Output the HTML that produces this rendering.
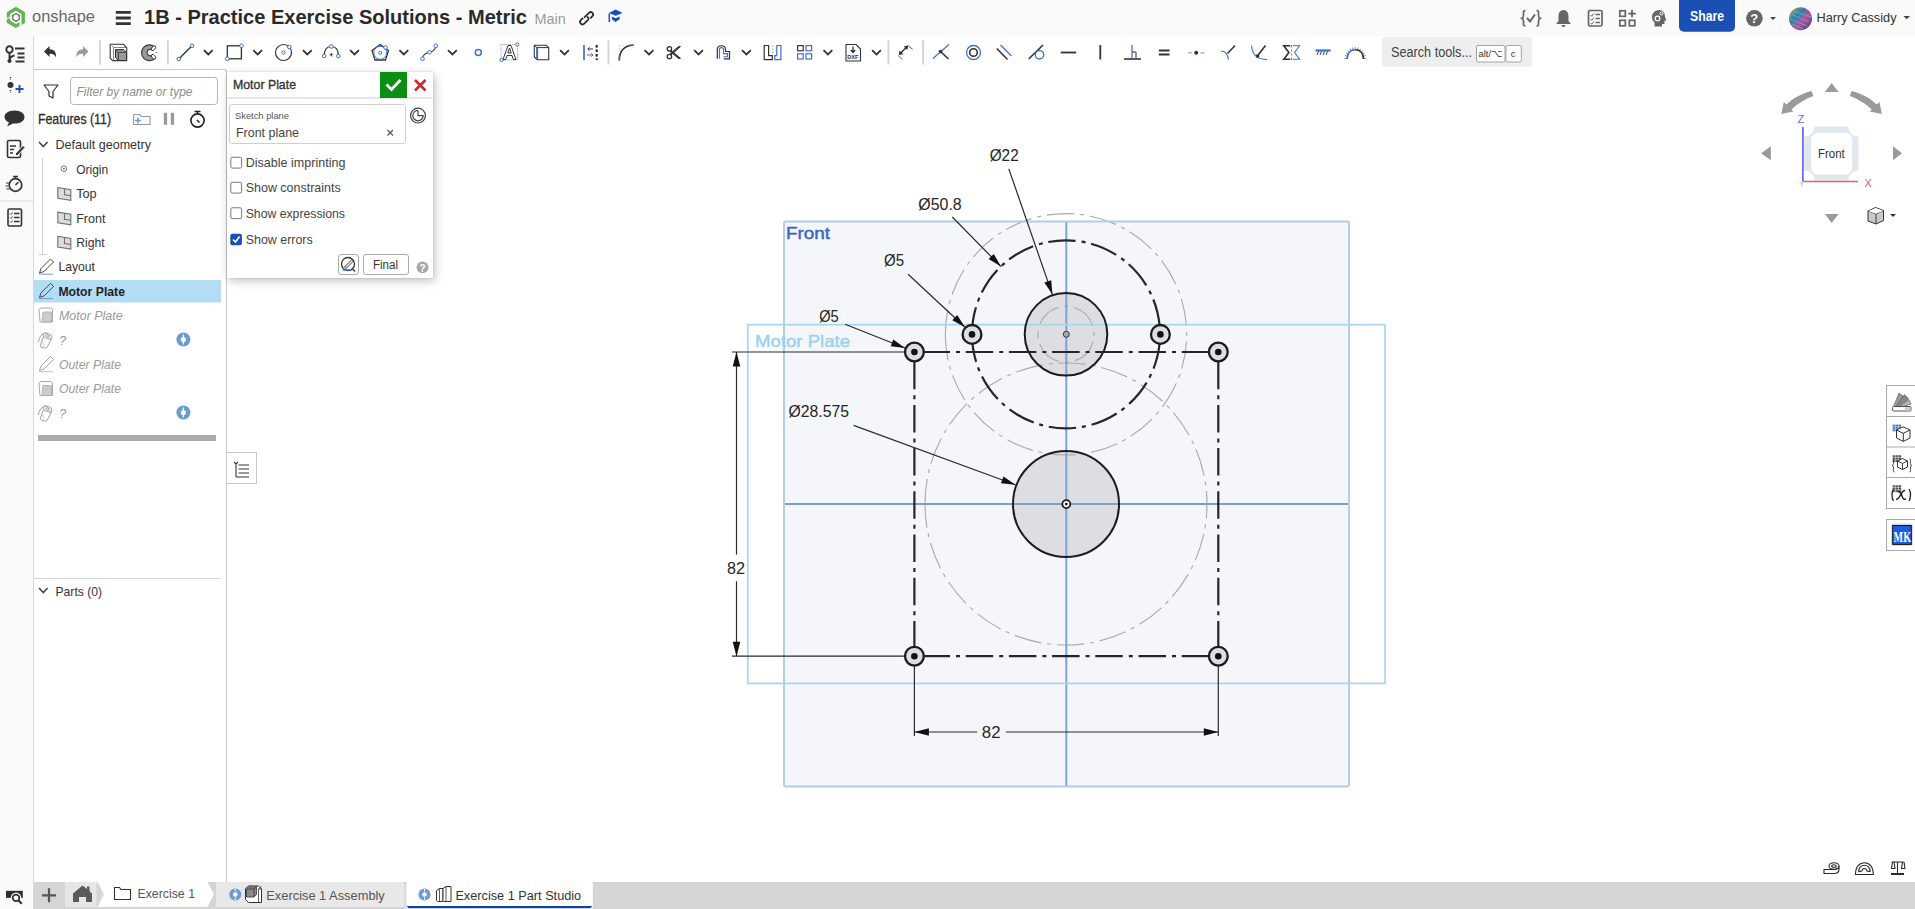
<!DOCTYPE html>
<html><head><meta charset="utf-8">
<style>
*{box-sizing:border-box;margin:0;padding:0}
html,body{width:1915px;height:909px;overflow:hidden;background:#fff;font-family:"Liberation Sans",sans-serif;color:#333}
.a{position:absolute}
svg{position:absolute;overflow:visible}
text{font-family:"Liberation Sans",sans-serif}
#topbar{left:0;top:0;width:1915px;height:36px;background:#fafafa}
#lstrip{left:0;top:36px;width:34px;height:873px;background:#fafafa;border-right:1px solid #d8d8d8}
#fpanel{left:33px;top:69px;width:194px;height:813px;background:#fff;border-top:1px solid #c9c9c9;border-right:1px solid #c9c9c9;border-left:1px solid #d8d8d8;border-top-right-radius:3px}
#tabbar{left:34px;top:882px;width:1881px;height:27px;background:#d5d5d5}
#dlg{left:227px;top:72px;width:206px;height:206px;background:#fff;box-shadow:2px 3px 9px rgba(0,0,0,.24),0 0 2px rgba(0,0,0,.14)}
</style></head><body>
<div class="a" id="topbar"></div>
<div class="a" id="lstrip"></div>

<!-- SKETCH -->
<svg style="left:0;top:0" width="1915" height="909" viewBox="0 0 1915 909">
<rect x="784" y="221.5" width="565" height="565" rx="1.5" fill="#f4f6f9"/>
<circle cx="1066" cy="334.3" r="41.3" fill="#dcdee2"/>
<circle cx="1066" cy="504" r="53" fill="#dcdee2"/>
<g fill="none" stroke="#ababab" stroke-width="1.15" stroke-dasharray="27.5 6 4 5.7">
<path d="M945.3 334.3A120.7 120.7 0 0 1 1186.7 334.3A120.7 120.7 0 0 1 945.3 334.3" stroke-dashoffset="2.6"/>
<path d="M925 504A141 141 0 0 1 1207 504A141 141 0 0 1 925 504" stroke-dashoffset="2.2"/>
<path d="M1038 334.3A28 28 0 0 1 1094 334.3A28 28 0 0 1 1038 334.3" stroke-dashoffset="34.4"/>
</g>
<g stroke="#7aa0d2" stroke-width="1.9" fill="none">
<line x1="1066.3" y1="221.5" x2="1066.3" y2="786.5"/>
<line x1="784" y1="504" x2="1349" y2="504"/>
</g>
<rect x="784" y="221.5" width="565" height="565" rx="1.5" fill="none" stroke="#b3cbe7" stroke-width="1.9"/>
<rect x="747.8" y="324.7" width="637.2" height="358.7" fill="none" stroke="#a9d6ee" stroke-width="1.7"/>
<text x="786" y="239.3" font-size="17" fill="#3a66c4" stroke="#3a66c4" stroke-width="0.45" textLength="44" lengthAdjust="spacingAndGlyphs">Front</text>
<text x="755" y="347.3" font-size="17" fill="#9cd2ee" stroke="#9cd2ee" stroke-width="0.45" textLength="95" lengthAdjust="spacingAndGlyphs">Motor Plate</text>
<circle cx="1066" cy="334.3" r="41.3" fill="none" stroke="#1c1c1c" stroke-width="2"/>
<circle cx="1066" cy="504" r="53" fill="none" stroke="#1c1c1c" stroke-width="2"/>
<path d="M972 334.3A94 94 0 0 1 1160 334.3A94 94 0 0 1 972 334.3" fill="none" stroke="#262626" stroke-width="2.2" stroke-dasharray="27.5 6 4 5.7"/>
<line x1="922.5" y1="352" x2="1218" y2="352" stroke="#262626" stroke-width="2.2" stroke-dasharray="27.5 6 4 5.7" fill="none"/>
<line x1="922.5" y1="656.2" x2="1218" y2="656.2" stroke="#262626" stroke-width="2.2" stroke-dasharray="27.5 6 4 5.7" fill="none"/>
<line x1="914.4" y1="361.7" x2="914.4" y2="656" stroke="#262626" stroke-width="2.2" stroke-dasharray="27.5 6 4 5.7" fill="none"/>
<line x1="1218.3" y1="361.7" x2="1218.3" y2="656" stroke="#262626" stroke-width="2.2" stroke-dasharray="27.5 6 4 5.7" fill="none"/>
<path d="M732 352H914M732 656.2H914M914.4 656V736M1218.3 656V736M736.5 352V554.5M736.5 581.3V656M914.4 732H977.2M1005.8 732H1218.3" stroke="#2a2a2a" stroke-width="1.2" fill="none"/>
<path d="M1008.8 168.9L1052.4 294.6M952.3 217L1001 266.6M908.1 274.3L965 327.2M845.1 324.2L905 348M853.6 425.4L1015.4 484.7" stroke="#2a2a2a" stroke-width="1.2" fill="none"/>
<path d="M1052.4 294.6L1044.4 282.6L1051.2 280.2Z" fill="#111"/>
<path d="M1001.0 266.6L988.6 259.1L993.8 254.1Z" fill="#111"/>
<path d="M965.0 327.2L952.3 320.3L957.2 315.0Z" fill="#111"/>
<path d="M905.0 348.0L890.7 346.2L893.3 339.5Z" fill="#111"/>
<path d="M1015.4 484.7L1001.0 483.3L1003.5 476.5Z" fill="#111"/>
<path d="M736.5 352.0L740.3 366.5L732.7 366.5Z" fill="#111"/>
<path d="M736.5 656.2L732.7 641.7L740.3 641.7Z" fill="#111"/>
<path d="M914.4 732.0L928.9 728.2L928.9 735.8Z" fill="#111"/>
<path d="M1218.3 732.0L1203.8 735.8L1203.8 728.2Z" fill="#111"/>
<circle cx="972" cy="334.4" r="9.4" fill="#dcdee2" stroke="#1c1c1c" stroke-width="2.3"/>
<circle cx="972" cy="334.4" r="3.3" fill="#111"/>
<circle cx="1160.4" cy="334.4" r="9.4" fill="#dcdee2" stroke="#1c1c1c" stroke-width="2.3"/>
<circle cx="1160.4" cy="334.4" r="3.3" fill="#111"/>
<circle cx="914.4" cy="352" r="9.4" fill="#dcdee2" stroke="#1c1c1c" stroke-width="2.3"/>
<circle cx="914.4" cy="352" r="3.3" fill="#111"/>
<circle cx="1218.3" cy="352" r="9.4" fill="#dcdee2" stroke="#1c1c1c" stroke-width="2.3"/>
<circle cx="1218.3" cy="352" r="3.3" fill="#111"/>
<circle cx="914.4" cy="656.2" r="9.4" fill="#dcdee2" stroke="#1c1c1c" stroke-width="2.3"/>
<circle cx="914.4" cy="656.2" r="3.3" fill="#111"/>
<circle cx="1218.3" cy="656.2" r="9.4" fill="#dcdee2" stroke="#1c1c1c" stroke-width="2.3"/>
<circle cx="1218.3" cy="656.2" r="3.3" fill="#111"/>
<circle cx="1066.3" cy="334.3" r="3" fill="#aaa" stroke="#333" stroke-width="1"/>
<circle cx="1066.3" cy="504.1" r="4" fill="#fff" stroke="#1c1c1c" stroke-width="1.8"/><circle cx="1066.3" cy="504.1" r="1.4" fill="#111"/>
<text x="989.7" y="160.5" font-size="16.2" fill="#262626" textLength="29" lengthAdjust="spacingAndGlyphs">Ø22</text>
<text x="918.3" y="209.5" font-size="16.2" fill="#262626" textLength="43.4" lengthAdjust="spacingAndGlyphs">Ø50.8</text>
<text x="884" y="266" font-size="16.2" fill="#262626" textLength="20" lengthAdjust="spacingAndGlyphs">Ø5</text>
<text x="819.2" y="322" font-size="16.2" fill="#262626" textLength="19.6" lengthAdjust="spacingAndGlyphs">Ø5</text>
<text x="788.5" y="417" font-size="16.2" fill="#262626" textLength="60.5" lengthAdjust="spacingAndGlyphs">Ø28.575</text>
<text x="727" y="573.7" font-size="16.2" fill="#262626" textLength="18" lengthAdjust="spacingAndGlyphs">82</text>
<text x="981.8" y="737.9" font-size="16.2" fill="#262626" textLength="18.7" lengthAdjust="spacingAndGlyphs">82</text>
</svg>

<div class="a" id="fpanel"></div>
<div class="a" id="dlg"></div>
<div class="a" id="tabbar"></div>

<!-- TOOLBAR -->
<svg style="left:0;top:0" width="1915" height="909" viewBox="0 0 1915 909">
<path d="M44 51.5L49.5 46V49.3C54 49.3 56.5 52 56 57.5C55 54.5 53 53.5 49.5 53.7V57Z" fill="#333"/>
<path d="M88.5 51.5L83 46V49.3C78.5 49.3 76 52 76.5 57.5C77.5 54.5 79.5 53.5 83 53.7V57Z" fill="#9a9a9a"/>
<rect x="99" y="40.3" width="1.8" height="24.3" fill="#d2d2d2"/>
<rect x="167" y="40.3" width="1.8" height="24.3" fill="#d2d2d2"/>
<rect x="607.5" y="40.3" width="1.8" height="24.3" fill="#d2d2d2"/>
<rect x="887.5" y="40.3" width="1.8" height="24.3" fill="#d2d2d2"/>
<rect x="922.2" y="40.3" width="1.8" height="24.3" fill="#d2d2d2"/>
<path d="M110.2 44.3H123.5L126.7 47.6V60.6H112.6L110.2 58.2Z" fill="#fff" stroke="#333" stroke-width="1.1" stroke-linejoin="round"/>
<path d="M111.8 45.8L113.5 47.5V60.3M113.5 47.5H126.3" fill="none" stroke="#666" stroke-width="0.8"/>
<path d="M115.5 49.6H123.6L126.5 52.4V60.5H118.4L115.5 57.6Z" fill="#999" stroke="#333" stroke-width="1"/>
<path d="M115.5 49.6L118.4 52.4H126.5M118.4 52.4V60.5" fill="none" stroke="#333" stroke-width="0.9"/>
<path d="M154.4 46.6A7.9 7.9 0 1 0 154.6 58.8L151.5 55.6A3.3 3.3 0 1 1 151.5 49.4Z" fill="#9a9a9a" stroke="#333" stroke-width="1.1" stroke-linejoin="round"/>
<ellipse cx="153.5" cy="48.2" rx="1.6" ry="2.8" transform="rotate(40 153.5 48.2)" fill="#fff" stroke="#333" stroke-width="0.9"/>
<ellipse cx="153.5" cy="56.8" rx="1.6" ry="2.8" transform="rotate(-40 153.5 56.8)" fill="#fff" stroke="#333" stroke-width="0.9"/>
<path d="M155.3 52.5H157.6M142.3 52.5H143.2" stroke="#777" stroke-width="0.8"/>
<path d="M178.8 59L192 45.8" stroke="#333" stroke-width="1.4"/>
<circle cx="178.8" cy="59" r="1.8" fill="#fff" stroke="#3a6fd4" stroke-width="1"/>
<circle cx="192" cy="45.8" r="1.8" fill="#fff" stroke="#3a6fd4" stroke-width="1"/>
<path d="M203.9 50.199999999999996L208.3 54.5L212.70000000000002 50.199999999999996" fill="none" stroke="#333" stroke-width="1.8"/>
<rect x="227.3" y="45.8" width="14.1" height="13" fill="none" stroke="#333" stroke-width="1.3"/>
<circle cx="227.3" cy="58.8" r="1.8" fill="#fff" stroke="#3a6fd4" stroke-width="1"/>
<circle cx="241.4" cy="45.8" r="1.8" fill="#fff" stroke="#3a6fd4" stroke-width="1"/>
<path d="M253.29999999999998 50.199999999999996L257.7 54.5L262.09999999999997 50.199999999999996" fill="none" stroke="#333" stroke-width="1.8"/>
<circle cx="283.5" cy="52.5" r="8" fill="none" stroke="#333" stroke-width="1.2"/>
<circle cx="283.5" cy="52.5" r="1.6" fill="#fff" stroke="#3a6fd4" stroke-width="1"/>
<circle cx="289.3" cy="47" r="1.8" fill="#fff" stroke="#3a6fd4" stroke-width="1"/>
<path d="M302.90000000000003 50.199999999999996L307.3 54.5L311.7 50.199999999999996" fill="none" stroke="#333" stroke-width="1.8"/>
<path d="M324.2 56C324.2 50 327 46.5 331.3 46.5S338.4 50 338.4 56" fill="none" stroke="#333" stroke-width="1.2"/>
<circle cx="324.2" cy="56" r="1.8" fill="#fff" stroke="#3a6fd4" stroke-width="1"/>
<circle cx="338.4" cy="56" r="1.8" fill="#fff" stroke="#3a6fd4" stroke-width="1"/>
<circle cx="331.3" cy="46.5" r="1.8" fill="#fff" stroke="#3a6fd4" stroke-width="1"/>
<path d="M331.3 52.5L332 54.3L333.6 54.8L332 55.3L331.3 57.1L330.6 55.3L329 54.8L330.6 54.3Z" fill="#333"/>
<path d="M350.1 50.199999999999996L354.5 54.5L358.9 50.199999999999996" fill="none" stroke="#333" stroke-width="1.8"/>
<path d="M380.2 44.5L388.5 50.5L385.5 60H375L372 50.5Z" fill="none" stroke="#333" stroke-width="1.3"/>
<circle cx="380.2" cy="52.8" r="6.5" fill="none" stroke="#3a6fd4" stroke-width="1"/>
<circle cx="380.2" cy="52.8" r="1.5" fill="#fff" stroke="#3a6fd4" stroke-width="1"/>
<circle cx="385.5" cy="47.5" r="1.8" fill="#fff" stroke="#3a6fd4" stroke-width="1"/>
<path d="M399.40000000000003 50.199999999999996L403.8 54.5L408.2 50.199999999999996" fill="none" stroke="#333" stroke-width="1.8"/>
<path d="M422.5 58.5C423 54.5 425.5 53 429.5 52.3C433 51.5 435.5 49.5 435.8 46" fill="none" stroke="#333" stroke-width="1.1"/>
<circle cx="422.5" cy="58.8" r="1.8" fill="#fff" stroke="#3a6fd4" stroke-width="1"/>
<circle cx="429.5" cy="52.3" r="1.8" fill="#fff" stroke="#3a6fd4" stroke-width="1"/>
<circle cx="435.8" cy="45.8" r="1.8" fill="#fff" stroke="#3a6fd4" stroke-width="1"/>
<path d="M448.0 50.199999999999996L452.4 54.5L456.79999999999995 50.199999999999996" fill="none" stroke="#333" stroke-width="1.8"/>
<circle cx="478.3" cy="52.6" r="3" fill="none" stroke="#3a6fd4" stroke-width="1.5"/>
<rect x="501" y="44.5" width="16.5" height="15.5" fill="none" stroke="#777" stroke-width="0.7" stroke-dasharray="1.2 1"/>
<path d="M503 59.5L508 45.5H511L516 59.5H513.3L512 55.5H507L505.7 59.5ZM507.8 53H511.2L509.5 48Z" fill="#fff" stroke="#333" stroke-width="1"/>
<circle cx="501.5" cy="60" r="1.6" fill="#fff" stroke="#3a6fd4" stroke-width="1"/>
<circle cx="517.3" cy="44.5" r="1.6" fill="#fff" stroke="#3a6fd4" stroke-width="1"/>
<path d="M534.3 45.3H546.4L548.7 47.6V59.7H537L534.3 57Z" fill="#fff" stroke="#333" stroke-width="1.1" stroke-linejoin="round"/>
<path d="M534.3 45.3L537 47.6H548.7M537 47.6V59.7" fill="none" stroke="#333" stroke-width="1"/>
<path d="M537.2 47.8V59.6" stroke="#3a6fd4" stroke-width="1.9"/>
<path d="M560.1 50.199999999999996L564.5 54.5L568.9 50.199999999999996" fill="none" stroke="#333" stroke-width="1.8"/>
<path d="M584 45V60M597 45V47.5M597 49.5V52M597 54V56.5M597 58.5V60" stroke="#3a6fd4" stroke-width="1.7"/>
<path d="M596.5 45V47.5M596.5 49.5V52M596.5 54V56.5M596.5 58.5V60" stroke="#222" stroke-width="1.7"/>
<path d="M593 49H588M589.5 47.3L587.8 49L589.5 50.7" fill="none" stroke="#333" stroke-width="1"/>
<path d="M587 55H593M591.3 53.3L593 55L591.3 56.7" fill="none" stroke="#3a6fd4" stroke-width="1"/>
<path d="M619.3 60.5C619.5 51 624 45.5 633.5 45.3" fill="none" stroke="#333" stroke-width="1.6"/>
<path d="M619.3 55V60.5M629 45.3H633.8" stroke="#3a6fd4" stroke-width="1.4"/>
<path d="M619.3 51V45.3H624" fill="none" stroke="#999" stroke-width="0.6" stroke-dasharray="1 1"/>
<path d="M644.6 50.199999999999996L649 54.5L653.4 50.199999999999996" fill="none" stroke="#333" stroke-width="1.8"/>
<circle cx="669.4" cy="48.8" r="2.2" fill="none" stroke="#333" stroke-width="1.3"/><circle cx="669.4" cy="56.5" r="2.2" fill="none" stroke="#333" stroke-width="1.3"/>
<path d="M671 50.3L680.5 58.3L678.8 58.7L670.2 51.6Z" fill="#333" stroke="#333" stroke-width="0.9" stroke-linejoin="round"/>
<path d="M671 55L680.5 46.6L678.8 46.3L670.2 53.7Z" fill="#333" stroke="#333" stroke-width="0.9" stroke-linejoin="round"/>
<path d="M694.2 50.199999999999996L698.6 54.5L703.0 50.199999999999996" fill="none" stroke="#333" stroke-width="1.8"/>
<path d="M717.3 58.8V49.5C717.3 44.5 725.5 44.5 725.5 49.5V51.5H729.5V58.8H723.8" fill="none" stroke="#333" stroke-width="1.2"/>
<path d="M719.4 58.8V49.6C719.4 47 723.5 47 723.5 49.6V53.6H727.5V56.8H723.5" fill="none" stroke="#3a6fd4" stroke-width="1.1"/>
<path d="M742.0 50.199999999999996L746.4 54.5L750.8 50.199999999999996" fill="none" stroke="#333" stroke-width="1.8"/>
<path d="M764.2 45.5H768.6V55.6H772.3V59.6H764.2Z" fill="none" stroke="#333" stroke-width="1.2"/>
<path d="M776.8 45.5H780.9V59.6H774.8V55.6H776.8Z" fill="none" stroke="#3a6fd4" stroke-width="1.2"/>
<path d="M772.8 45.5V47M772.8 48.5V50M772.8 51.5V53" stroke="#888" stroke-width="0.8"/>
<rect x="797.6" y="45.6" width="5.6" height="5.2" fill="none" stroke="#333" stroke-width="1.2"/>
<rect x="806.0" y="45.6" width="5.6" height="5.2" fill="none" stroke="#3a6fd4" stroke-width="1.2"/>
<rect x="797.6" y="53.8" width="5.6" height="5.2" fill="none" stroke="#3a6fd4" stroke-width="1.2"/>
<rect x="806.0" y="53.8" width="5.6" height="5.2" fill="none" stroke="#3a6fd4" stroke-width="1.2"/>
<path d="M823.5 50.199999999999996L827.9 54.5L832.3 50.199999999999996" fill="none" stroke="#333" stroke-width="1.8"/>
<path d="M846 44.5H856L860.5 49V61H846Z" fill="#fff" stroke="#333" stroke-width="1.1"/>
<path d="M853 46.5V52M850.8 50L853 52.5L855.2 50" fill="none" stroke="#333" stroke-width="1.3"/>
<text x="847.3" y="59.2" font-size="5.6" font-weight="bold" fill="#333" font-family="Liberation Sans">DXF</text>
<path d="M872.1 50.199999999999996L876.5 54.5L880.9 50.199999999999996" fill="none" stroke="#333" stroke-width="1.8"/>
<path d="M900.5 53.3L906.5 47.3" stroke="#333" stroke-width="1.5"/>
<path d="M898.8 55L903.3 54.2L899.6 50.5Z M908.2 45.6L903.7 46.4L907.4 50.1Z" fill="#333"/>
<path d="M898.2 55.6L902.4 59.5M907.9 45.4L912.6 49.3" stroke="#333" stroke-width="0.8"/>
<path d="M933 58.5L949 44.5" stroke="#3a6fd4" stroke-width="1.2"/><path d="M940.5 51.5L948.5 59" stroke="#333" stroke-width="1.6"/><circle cx="940.5" cy="51.5" r="1.8" fill="#333"/>
<circle cx="973.5" cy="52.5" r="7" fill="none" stroke="#3a6fd4" stroke-width="1.3"/><circle cx="973.5" cy="52.5" r="3.8" fill="none" stroke="#333" stroke-width="1.6"/>
<path d="M996.8 48.5L1007.5 59.5" stroke="#333" stroke-width="1.6"/><path d="M1000.5 45L1011.5 56" stroke="#3a6fd4" stroke-width="1.2"/>
<path d="M1028.7 59L1043 45" stroke="#333" stroke-width="1.6"/><circle cx="1039.5" cy="54.8" r="4.2" fill="none" stroke="#3a6fd4" stroke-width="1.3"/>
<path d="M1060.8 52.5H1076.2" stroke="#333" stroke-width="1.8"/><path d="M1100.3 45V59.5" stroke="#333" stroke-width="1.8"/>
<path d="M1124 59H1141" stroke="#333" stroke-width="1.6"/><path d="M1132 45V58" stroke="#3a6fd4" stroke-width="1.2"/><path d="M1132 52H1136V58" fill="none" stroke="#333" stroke-width="1"/>
<path d="M1158.8 50.5H1169.5M1158.8 54.5H1169.5" stroke="#333" stroke-width="1.8"/>
<path d="M1187.8 52.8H1191.8M1200.3 52.8H1204.5" stroke="#86a9df" stroke-width="1.2"/><circle cx="1196.2" cy="52.8" r="2" fill="#333"/>
<path d="M1221 51C1225 51 1227.5 53 1228.5 59.5" fill="none" stroke="#3a6fd4" stroke-width="1.2"/><path d="M1227.5 53.5L1235 45.5" stroke="#333" stroke-width="1.6"/>
<path d="M1251.5 45.5C1252 53 1256 59.5 1267 59.5" fill="none" stroke="#3a6fd4" stroke-width="1.1"/><path d="M1257 56.5L1265.5 45.5" stroke="#333" stroke-width="1.6"/><circle cx="1257.5" cy="56" r="1.8" fill="#333"/>
<path d="M1290.3 45.8H1283.8L1288.9 52.5L1283.8 59.2H1290.3" fill="none" stroke="#333" stroke-width="1.6"/>
<path d="M1291.6 45V47.5M1291.6 49.5V51.5M1291.6 53.5V55.5M1291.6 57.5V60" stroke="#555" stroke-width="0.8"/>
<path d="M1292.8 45.8H1299.6L1294.6 52.5L1299.6 59.2H1292.8" fill="none" stroke="#3a6fd4" stroke-width="1.1"/>
<path d="M1315.5 50.5H1330.5" stroke="#3a6fd4" stroke-width="2.2"/><path d="M1317 55L1318.5 51.5M1320 55L1321.5 51.5M1323 55L1324.5 51.5M1326 55L1327.5 51.5" stroke="#222" stroke-width="0.9"/>
<path d="M1347.1 58.5L1344.5 58.5M1347.4 56.3L1344.9 55.6M1348.2 54.2L1345.9 52.8M1349.5 52.4L1347.7 50.5M1351.2 51.0L1349.9 48.7M1353.2 50.2L1352.5 47.5M1355.3 49.9L1355.3 47.2M1357.4 50.2L1358.1 47.5M1359.4 51.0L1360.7 48.7M1361.1 52.4L1362.9 50.5M1362.4 54.2L1364.7 52.8M1363.2 56.3L1365.7 55.6M1363.5 58.5L1366.1 58.5" stroke="#555" stroke-width="0.7"/>
<path d="M1347.1 59C1347.5 53 1350.5 49.8 1355.3 49.8" fill="none" stroke="#3a6fd4" stroke-width="1.6"/>
<path d="M1355.3 49.8C1360 49.8 1363.1 53 1363.5 59" fill="none" stroke="#333" stroke-width="1.6"/>
</svg>

<!-- CHROME OVERLAY -->
<svg style="left:0;top:0" width="1915" height="909" viewBox="0 0 1915 909">
<!-- logo -->
<path d="M15.8 6.8L24.9 12V23L21.5 25V14L15.8 10.7L10 14V16.5L6.8 18.3V12.3Z" fill="#5cb84a"/>
<path d="M6.8 19.5L10 17.7V20.5L16 24L19.6 21.9V25.8L15.8 28L6.8 22.8Z" fill="#5cb84a"/>
<path d="M12.8 15.4L16 13.6L19.2 15.4V19.5L16 21.3L12.8 19.5Z" fill="none" stroke="#5a5a5a" stroke-width="1.2"/>
<text x="32" y="21.7" font-size="17" fill="#686868" textLength="63" lengthAdjust="spacingAndGlyphs">onshape</text>
<!-- hamburger -->
<path d="M115.8 12.4H130.8M115.8 18H130.8M115.8 23.6H130.8" stroke="#333" stroke-width="2.8"/>
<text x="144" y="23.8" font-size="20.5" font-weight="bold" fill="#2a2a2a" textLength="383" lengthAdjust="spacingAndGlyphs">1B - Practice Exercise Solutions - Metric</text>
<text x="534.5" y="23.8" font-size="14.5" fill="#9a9a9a" textLength="31.3" lengthAdjust="spacingAndGlyphs">Main</text>
<!-- link -->
<g fill="none" stroke="#2e2e2e" stroke-width="1.8" stroke-linecap="round">
<path d="M584.6 17.2L589 12.8A2.4 2.4 0 0 1 592.4 16.2L590.8 17.8"/>
<path d="M582.6 18.4L580.8 20.2A2.4 2.4 0 0 0 584.2 23.6L588.2 19.6A1.6 1.6 0 0 0 587.4 17"/>
</g>
<!-- grad cap -->
<path d="M608.8 12.9L615.7 9.4L622.7 12.9L615.7 15.8Z" fill="#1a4db5"/>
<path d="M611.7 16.4L615.6 18.2L619.9 16.4L619.5 19.2L615.5 22L612 19.2Z" fill="#1a4db5"/>
<path d="M609.3 13.5V22" stroke="#1a4db5" stroke-width="1.5"/>
<!-- right header icons -->
<g fill="none" stroke="#666" stroke-width="1.7">
<path d="M1525.5 10.5C1523 10.5 1523.5 12 1523.5 15S1522.5 18 1521.8 18.3C1522.5 18.6 1523.5 18.5 1523.5 21.5S1523 26 1525.5 26"/>
<path d="M1536.5 10.5C1539 10.5 1538.5 12 1538.5 15S1539.5 18 1540.2 18.3C1539.5 18.6 1538.5 18.5 1538.5 21.5S1539 26 1536.5 26"/>
<path d="M1527 18L1530 21.3L1535 14.5" stroke-width="2"/>
<rect x="1588.5" y="10.5" width="13.5" height="15.5" rx="1.5"/>
<path d="M1590.5 15L1591.7 16.3L1593.8 13.5M1590.5 19L1591.7 20.3L1593.8 17.5M1590.5 23L1591.7 24.3L1593.8 21.5" stroke-width="1"/>
<path d="M1595.5 14.5H1600M1595.5 18.5H1600M1595.5 22.5H1600" stroke-width="1.5"/>
<rect x="1619.8" y="10.8" width="5.5" height="5.5"/><rect x="1619.8" y="20.3" width="5.5" height="5.5"/><rect x="1629.3" y="20.3" width="5.5" height="5.5"/>
<path d="M1632 10V17.3M1628.3 13.6H1635.8" stroke-width="1.8"/>
</g>
<path d="M1563.5 10C1560 10 1558.5 13 1558.5 16.5V21L1556 24H1571L1568.5 21V16.5C1568.5 13 1567 10 1563.5 10ZM1561.5 25H1565.5A2 2 0 0 1 1561.5 25Z" fill="#666"/>
<path d="M1659.5 10C1655 10 1652 13 1652 17C1652 19.5 1653 21 1654.5 22.5V26.5H1662V24H1664.5V20.5H1666.5L1665 17C1665 13 1663 10 1659.5 10Z" fill="#666"/>
<circle cx="1657.5" cy="18.5" r="2.3" fill="none" stroke="#fff" stroke-width="1.3"/><circle cx="1661.5" cy="13.5" r="1.5" fill="none" stroke="#fff" stroke-width="1"/>
<!-- share -->
<rect x="1679" y="-4" width="56" height="35.7" rx="5" fill="#1b4fb3"/>
<text x="1690" y="20.9" font-size="14" font-weight="bold" fill="#fff" textLength="34" lengthAdjust="spacingAndGlyphs">Share</text>
<circle cx="1754.4" cy="18.3" r="8.3" fill="#666"/>
<text x="1750.2" y="23.2" font-size="13" font-weight="bold" fill="#fff">?</text>
<path d="M1770 17H1776L1773 20Z" fill="#444"/>
<defs><linearGradient id="av" x1="0" y1="0" x2="1" y2="1"><stop offset="0" stop-color="#d9a23a"/><stop offset=".35" stop-color="#2a7fb0"/><stop offset=".6" stop-color="#c24c9c"/><stop offset="1" stop-color="#2b3d7a"/></linearGradient></defs>
<circle cx="1800.5" cy="18.7" r="11.5" fill="url(#av)"/>
<path d="M1791 14L1809 22M1790 19L1807 26M1793 11L1811 17M1792 24L1803 29" stroke="#49c0d8" stroke-width="1" opacity=".8"/>
<text x="1816.5" y="21.7" font-size="13.5" fill="#333" textLength="80" lengthAdjust="spacingAndGlyphs">Harry Cassidy</text>
<path d="M1903.5 16H1910L1906.7 19.3Z" fill="#444"/>
<!-- search box -->
<rect x="1382" y="37" width="150" height="30" rx="3" fill="#eeeeee"/>
<text x="1391" y="56.8" font-size="14" fill="#444" textLength="81" lengthAdjust="spacingAndGlyphs">Search tools...</text>
<rect x="1476.5" y="45.5" width="28.5" height="16.5" rx="1.5" fill="#fff" stroke="#9a9a9a" stroke-width=".9"/>
<rect x="1506" y="45.5" width="15.3" height="16.5" rx="1.5" fill="#fff" stroke="#9a9a9a" stroke-width=".9"/>
<text x="1478.5" y="57.3" font-size="9.5" fill="#333" textLength="24.5" lengthAdjust="spacingAndGlyphs">alt/⌥</text>
<text x="1510.8" y="57.3" font-size="9.5" fill="#333">c</text>

<!-- left strip icons -->
<g fill="none" stroke="#333">
<circle cx="9.5" cy="49.5" r="3.2" stroke-width="1.9"/><path d="M9.5 52.7V61M9.5 60C10 56.5 12 56 14.5 55.5" stroke-width="1.9"/><circle cx="9.5" cy="61" r="1.6" fill="#333"/>
<path d="M15 48.5H24.5M17.5 53.5H24.5M17.5 57.5H24.5M15.5 61.5H24.5" stroke-width="1.9"/>
<path d="M10.5 77V80M10.5 90V93" stroke-width="1.4" stroke-dasharray="1.2 1.2"/>
<path d="M15.5 89H23.5M19.5 85V93" stroke="#1d4fb8" stroke-width="1.9"/>
<rect x="7.5" y="140.5" width="13" height="17" rx="1.5" stroke-width="1.6"/><path d="M10 146H16M10 149.5H14M10 153H13" stroke-width="1.3"/>
<path d="M15 154L23 145.5L25 147.5L17 156Z" fill="#333" stroke="#f7f7f7" stroke-width="1"/>
<circle cx="15.5" cy="185" r="6.3" stroke-width="1.7"/><path d="M13 176.5H18M15.5 176.5V178.7M15.5 185L18.5 182" stroke-width="1.6"/>
<path d="M6 183H9M5.5 186H8.5M6.5 189H9.5" stroke-width="1"/>
<rect x="8" y="209" width="13.5" height="17" rx="1.5" stroke-width="1.6"/>
<path d="M10 213.5L11 214.5L12.5 212.5M10 217.5L11 218.5L12.5 216.5M10 221.5L11 222.5L12.5 220.5" stroke-width=".9"/>
<path d="M14 213.5H19.5M14 217.5H19.5M14 221.5H19.5" stroke-width="1.4"/>
</g>
<circle cx="10.5" cy="85" r="3" fill="#333"/>
<path d="M14.5 110.5C8 110.5 4.5 113.5 4.5 117C4.5 119.5 6.5 121.5 9 122.5L7 126.5L13 123.5C14 123.6 14.5 123.6 15 123.6C21 123.6 24.5 120.5 24.5 117S21 110.5 14.5 110.5Z" fill="#333"/>
<rect x="0" y="200.5" width="33" height="1" fill="#dcdcdc"/>
<!-- bottom-left icon -->
<rect x="6" y="890.8" width="16.8" height="7.1" fill="#2e2e2e"/>
<circle cx="16" cy="897.9" r="5.3" fill="#fafafa"/>
<circle cx="16" cy="897.9" r="3.3" fill="#fafafa" stroke="#2e2e2e" stroke-width="1.7"/><path d="M18.3 900.2L21.8 903.8" stroke="#2e2e2e" stroke-width="2"/>
<!-- FEATURE PANEL -->
<path d="M44 85H58L53 91.5V98L49 96V91.5Z" fill="none" stroke="#333" stroke-width="1.2" stroke-linejoin="round"/>
<rect x="70.5" y="77.5" width="147" height="27" rx="3" fill="#fff" stroke="#b5b5b5" stroke-width="1"/>
<text x="76.5" y="96.2" font-size="13.3" font-style="italic" fill="#8e8e8e" textLength="116" lengthAdjust="spacingAndGlyphs">Filter by name or type</text>
<text x="38" y="124" font-size="14" fill="#2e2e2e" stroke="#2e2e2e" stroke-width="0.3" textLength="73" lengthAdjust="spacingAndGlyphs">Features (11)</text>
<path d="M133.5 115.5V124.5H150V116.5H141.5L139.5 114.5H134Z" fill="none" stroke="#999" stroke-width="1.1"/>
<path d="M135 120.5H141M138 117.5V123.5" stroke="#6f9ad8" stroke-width="1.5"/>
<rect x="163.8" y="112.8" width="3.3" height="12" fill="#999"/><rect x="170.8" y="112.8" width="3.3" height="12" fill="#999"/>
<circle cx="197.5" cy="120.5" r="6.6" fill="none" stroke="#222" stroke-width="1.6"/><path d="M194.5 111.5H200.5M197.5 111.5V114M197 120L199.5 122.5" stroke="#222" stroke-width="1.5"/>
<path d="M39 142L43.3 146.5L47.6 142" fill="none" stroke="#444" stroke-width="1.6"/>
<text x="55.5" y="149.4" font-size="13" fill="#333" textLength="95.5" lengthAdjust="spacingAndGlyphs">Default geometry</text>
<path d="M42.5 158V254.6M38.5 254.6H47" stroke="#d0d0d0" stroke-width="1"/>
<circle cx="63.9" cy="168.7" r="2.8" fill="none" stroke="#777" stroke-width="1"/><circle cx="63.9" cy="168.7" r="1" fill="#777"/>
<text x="76.2" y="173.8" font-size="13" fill="#333" textLength="32" lengthAdjust="spacingAndGlyphs">Origin</text>
<g id="pl"><path d="M57.8 187.5L70.8 189.7V200.3L57.8 198.2Z" fill="#dcdcdc" stroke="#707070" stroke-width="1.1"/><path d="M64.5 188.6V194.7L70.8 195.7" fill="none" stroke="#707070" stroke-width="1.1"/></g>
<use href="#pl" y="24.6"/><use href="#pl" y="48.8"/>
<text x="76.2" y="197.8" font-size="13" fill="#333" textLength="20.5" lengthAdjust="spacingAndGlyphs">Top</text>
<text x="76.2" y="222.9" font-size="13" fill="#333" textLength="29.3" lengthAdjust="spacingAndGlyphs">Front</text>
<text x="76.2" y="246.7" font-size="13" fill="#333" textLength="28.4" lengthAdjust="spacingAndGlyphs">Right</text>
<g id="pen"><path d="M39.5 273L41 268.5L50.5 259L53.5 262L44 271.5Z" fill="none" stroke="#444" stroke-width="1"/><path d="M39 274.2H53" stroke="#6f9ad8" stroke-width="1"/></g>
<text x="58.4" y="270.8" font-size="13" fill="#333" textLength="36.6" lengthAdjust="spacingAndGlyphs">Layout</text>
<rect x="34" y="280" width="187" height="22.5" fill="#b3dcf5"/>
<use href="#pen" y="24.4"/>
<text x="58.4" y="295.5" font-size="13" font-weight="bold" fill="#222" textLength="66.6" lengthAdjust="spacingAndGlyphs">Motor Plate</text>
<g id="ex"><path d="M39 309.5L41 308H51L52.5 309.5V322H40Z" fill="#fff" stroke="#aaa" stroke-width="1"/><path d="M43 312H51.5V322H43.5L42 320.5Z" fill="#ccc" stroke="#aaa" stroke-width=".8"/></g>
<text x="59" y="319.7" font-size="13" font-style="italic" fill="#9a9a9a" textLength="63.6" lengthAdjust="spacingAndGlyphs">Motor Plate</text>
<g id="qs" fill="none" stroke="#a0a0a0" stroke-width="1"><path d="M38.5 342C39 338 40.5 335 44 333.5"/><path d="M43.5 336.5L40 346M51.5 339L47 347.5M40 346C41 348 46 348.5 47 347.5"/><ellipse cx="47.5" cy="336" rx="4.6" ry="2.6" transform="rotate(22 47.5 336)"/><ellipse cx="47.5" cy="336" rx="2" ry="1" transform="rotate(22 47.5 336)"/><path d="M42.5 341L44 346.5" stroke="#ddd" stroke-width="1.5"/></g>
<text x="59" y="344.5" font-size="13" font-style="italic" fill="#9a9a9a">?</text>
<g id="inf"><circle cx="183.4" cy="339.5" r="7" fill="#6b9bd1"/><path d="M183.4 334.5V337M183.4 342V344.5" stroke="#fff" stroke-width="1.2"/><circle cx="183.4" cy="339.5" r="2.6" fill="#fff"/></g>
<g transform="translate(0 97.5)"><path d="M39.5 273L41 268.5L50.5 259L53.5 262L44 271.5Z" fill="none" stroke="#a8a8a8" stroke-width="1"/><path d="M39 274.2H53" stroke="#a9c3e6" stroke-width="1"/></g>
<text x="59" y="368.9" font-size="13" font-style="italic" fill="#9a9a9a" textLength="62" lengthAdjust="spacingAndGlyphs">Outer Plate</text>
<use href="#ex" y="73.5"/>
<text x="59" y="393.2" font-size="13" font-style="italic" fill="#9a9a9a" textLength="62" lengthAdjust="spacingAndGlyphs">Outer Plate</text>
<use href="#qs" y="73"/>
<text x="59" y="417.5" font-size="13" font-style="italic" fill="#9a9a9a">?</text>
<use href="#inf" y="73"/>
<rect x="38" y="435" width="178" height="6" fill="#ababab"/>
<rect x="34" y="578" width="187" height="1" fill="#d6d6d6"/>
<path d="M39 588L43.3 592.5L47.6 588" fill="none" stroke="#444" stroke-width="1.6"/>
<text x="55.5" y="596" font-size="13" fill="#333" textLength="46.6" lengthAdjust="spacingAndGlyphs">Parts (0)</text>
<!-- toggle box -->
<rect x="226.5" y="452.5" width="30" height="31" fill="#fff" stroke="#c8c8c8" stroke-width="1"/>
<path d="M234 462L236 464L238 462M236 464V477M238.5 465H249M238.5 469H249M238.5 473H249M236 477H249" fill="none" stroke="#333" stroke-width="1.1"/>

<!-- DIALOG -->
<text x="233" y="89" font-size="13.2" fill="#333" stroke="#333" stroke-width="0.35" textLength="63" lengthAdjust="spacingAndGlyphs">Motor Plate</text>
<rect x="227.5" y="97.5" width="205" height="1" fill="#d0d0d0"/>
<rect x="380" y="72" width="27" height="26" fill="#0b8f12"/>
<path d="M386.5 84.5L391.5 89.5L400.5 80" fill="none" stroke="#fff" stroke-width="2.8"/>
<path d="M415 80L425.5 90.5M425.5 80L415 90.5" stroke="#c7282e" stroke-width="2.5"/>
<rect x="229.5" y="104.5" width="176" height="39" rx="2" fill="#fff" stroke="#cfcfcf" stroke-width="1"/>
<text x="235" y="119.2" font-size="9.8" fill="#555" textLength="54" lengthAdjust="spacingAndGlyphs">Sketch plane</text>
<text x="236" y="136.9" font-size="13" fill="#444" textLength="63" lengthAdjust="spacingAndGlyphs">Front plane</text>
<path d="M387.5 130L393 135.5M393 130L387.5 135.5" stroke="#555" stroke-width="1.2"/>
<circle cx="418" cy="115.6" r="7.4" fill="none" stroke="#444" stroke-width="1.2"/><path d="M418 110.4V115.6H423.2A5.2 5.2 0 1 1 418 110.4" fill="none" stroke="#444" stroke-width="1.2"/>
<g fill="#fff" stroke="#777" stroke-width="1"><rect x="230.8" y="157.3" width="10.8" height="10.8" rx="1.5"/><rect x="230.8" y="182.3" width="10.8" height="10.8" rx="1.5"/><rect x="230.8" y="207.8" width="10.8" height="10.8" rx="1.5"/></g>
<rect x="230.3" y="233.7" width="11.6" height="11.6" rx="2" fill="#1b4fb3"/>
<path d="M233 239.5L235.5 242L239.5 236.5" fill="none" stroke="#fff" stroke-width="1.6"/>
<text x="245.7" y="167.2" font-size="13" fill="#444" textLength="99.7" lengthAdjust="spacingAndGlyphs">Disable imprinting</text>
<text x="245.7" y="192.2" font-size="13" fill="#444" textLength="95" lengthAdjust="spacingAndGlyphs">Show constraints</text>
<text x="245.7" y="217.7" font-size="13" fill="#444" textLength="99.3" lengthAdjust="spacingAndGlyphs">Show expressions</text>
<text x="245.7" y="244" font-size="13" fill="#444" textLength="67" lengthAdjust="spacingAndGlyphs">Show errors</text>
<rect x="338.5" y="254.5" width="20" height="20" rx="2.5" fill="#fff" stroke="#aaa" stroke-width="1"/>
<circle cx="348" cy="264" r="6.5" fill="none" stroke="#333" stroke-width="1.3"/><path d="M344.5 267L352 259.5L353.5 261L346 268.5Z" fill="none" stroke="#333" stroke-width="1"/><path d="M342.5 270H352" stroke="#3a6fd4" stroke-width="1.2"/><path d="M352.5 269L355 271.5" stroke="#333" stroke-width="1.4"/>
<rect x="363.5" y="254.5" width="45" height="20" rx="2.5" fill="#fff" stroke="#aaa" stroke-width="1"/>
<text x="373" y="269" font-size="12.5" fill="#333" textLength="25" lengthAdjust="spacingAndGlyphs">Final</text>
<circle cx="422.5" cy="267.3" r="5.9" fill="#a6a6a6"/><text x="419.2" y="271.5" font-size="10.5" font-weight="bold" fill="#fff">?</text>

<!-- TAB BAR -->
<rect x="34" y="882" width="30.5" height="27" fill="#d5d5d5"/>
<path d="M42 895.3H56M49 888.3V902.3" stroke="#555" stroke-width="2.2"/>
<rect x="65" y="882" width="31.5" height="25" fill="#e6e6e6"/>
<path d="M82.5 885.5L73 893.5V902H79V897H86V902H92V893.5L89.5 891.2V886.5H87V889L82.5 885.5Z" fill="#5a5a5a"/>
<path d="M97 882H207.5L213.8 894.5L207.5 907H97L103 894.5Z" fill="#fff"/>
<path d="M97.5 882.5L103.5 894.5L97.5 906.5" fill="none" stroke="#d9d9d9" stroke-width="1"/>
<path d="M114.5 887.5H119.5L121 889.5H130.5V899.5H114.5Z" fill="none" stroke="#333" stroke-width="1.1"/>
<text x="137.5" y="898" font-size="13.5" fill="#555" textLength="57.5" lengthAdjust="spacingAndGlyphs">Exercise 1</text>
<path d="M216 907V885A3 3 0 0 1 219 882H402A3 3 0 0 1 404.6 885V907Z" fill="#e8e8e8"/>
<path d="M406.3 908V881H592.8V908Z" fill="#fff"/>
<path d="M406.5 906H592.5L590.5 908H408.5Z" fill="#0a45ab"/>
<g id="tinf"><circle cx="235.3" cy="894.5" r="6" fill="#6b9bd1"/><circle cx="235.3" cy="894.5" r="2.3" fill="#fff"/><path d="M235.3 889V891.5M235.3 897.5V900" stroke="#fff" stroke-width="1"/></g>
<path d="M245.5 888.5L248.5 886H258.5L261.5 889V902.5H248.5L245.5 899.5Z" fill="#fff" stroke="#333" stroke-width="1"/>
<path d="M246.5 889L249 886.8H256.5V894.5L254 897H246.5Z" fill="#8a8a8a" stroke="#333" stroke-width=".8"/>
<path d="M246.5 889H254V897M254 889L256.5 886.8M261.5 889H258.5V902.5M258.5 889L261.5 886.5" fill="none" stroke="#333" stroke-width=".8"/>
<text x="266.3" y="900" font-size="13.5" fill="#555" textLength="118.5" lengthAdjust="spacingAndGlyphs">Exercise 1 Assembly</text>
<use href="#tinf" x="189.2"/>
<path d="M436.5 890.5L439.5 888.5H443V901.5H437.5L436.5 900.5Z" fill="#fff" stroke="#333" stroke-width="1"/><path d="M443 888.5L446 886.5H451V901.5H444L443 900.5Z" fill="#fff" stroke="#333" stroke-width="1"/><path d="M439.5 888.5V901M446 886.5V901" stroke="#333" stroke-width=".8"/>
<text x="455.4" y="900" font-size="13.5" fill="#333" textLength="125.8" lengthAdjust="spacingAndGlyphs">Exercise 1 Part Studio</text>

<!-- NAV CUBE -->
<g fill="#9a9a9a">
<path d="M1831.6 82.9L1838.6 92H1824.9Z"/>
<path d="M1831.6 222.9L1838.6 214.1H1824.9Z"/>
<path d="M1761.2 153.3L1770.8 146.3V160.3Z"/>
<path d="M1902 153.3L1893 146.3V160.3Z"/>
</g>
<path d="M1811.5 91L1813.3 96C1805 99 1797.5 103.5 1791.5 109.5L1793.5 111.5L1781.3 114L1783.8 102L1786.5 104.5C1793 98 1802 93.5 1811.5 91Z" fill="#9a9a9a"/>
<path d="M1851.7 91L1849.9 96C1858.2 99 1865.7 103.5 1871.7 109.5L1869.7 111.5L1881.9 114L1879.4 102L1876.7 104.5C1870.2 98 1861.2 93.5 1851.7 91Z" fill="#9a9a9a"/>
<path d="M1814.5 126.4H1848.3A10 10 0 0 0 1858.5 136.6V170.4A10 10 0 0 0 1848.3 180.6H1814.5A10 10 0 0 0 1804.3 170.4V136.6A10 10 0 0 0 1814.5 126.4Z" fill="#e1e7ee"/>
<rect x="1811" y="132.7" width="41.2" height="41.8" rx="7" fill="#fff"/>
<text x="1818" y="157.5" font-size="12" fill="#333" textLength="26.8" lengthAdjust="spacingAndGlyphs">Front</text>
<path d="M1802.9 127V181.5" stroke="#5b5be8" stroke-width="1.6"/>
<path d="M1802.9 181.5H1858" stroke="#e06060" stroke-width="1.6"/>
<text x="1797.5" y="122.5" font-size="11" fill="#6a6ae8">Z</text>
<text x="1864.5" y="187.2" font-size="11" fill="#e06060">X</text>
<text x="1799" y="186" font-size="8" fill="#7fd07f">Y</text>
<path d="M1875.5 207.5L1883.5 210.5V220.5L1876 224L1868 221V211Z" fill="#c9c9c9" stroke="#333" stroke-width="1"/>
<path d="M1868 211L1876 214L1883.5 210.5M1876 214V224" fill="none" stroke="#333" stroke-width=".9"/>
<path d="M1868.3 211.2L1875.5 208L1883.2 210.7L1876 213.7Z" fill="#fff"/>
<path d="M1890 214H1896L1893 217Z" fill="#333"/>

<!-- RIGHT PANEL -->
<rect x="1886.5" y="385.5" width="30" height="123" fill="#fff" stroke="#aaa" stroke-width="1"/>
<path d="M1886.5 416.5H1915M1886.5 447H1915M1886.5 477.5H1915" stroke="#aaa" stroke-width="1"/>
<rect x="1886.5" y="519.5" width="30" height="31" fill="#fff" stroke="#aaa" stroke-width="1"/>
<path d="M1893.5 406.5L1899 393L1903 396L1897.5 406.5Z" fill="#9a9a9a" stroke="#555" stroke-width=".6"/>
<path d="M1896 406.5L1904.5 394.5L1908.5 398.5L1900.5 406.5Z" fill="#8a8a8a" stroke="#555" stroke-width=".6"/>
<path d="M1899 406.5L1909 399.5L1911 404L1903 406.5Z" fill="#b5b5b5" stroke="#555" stroke-width=".6"/>
<rect x="1892.5" y="406.5" width="18.5" height="4.5" rx="1" fill="#fff" stroke="#444" stroke-width=".9"/><rect x="1905" y="407" width="5.5" height="3.5" fill="#ccc"/>
<g stroke="#fff" stroke-width=".5"><rect x="1892.3" y="424.3" width="9" height="7.2" fill="#3a6fd4"/><path d="M1895.3 424.3V431.5M1898.3 424.3V431.5M1892.3 426.7H1901.3M1892.3 429.1H1901.3"/></g>
<path d="M1896.5 430L1903 426.8L1910 430V438L1903.3 441.4L1896.5 438Z" fill="#fff" stroke="#333" stroke-width="1"/><path d="M1896.5 430L1903.3 433.3L1910 430M1903.3 433.3V441.4" fill="none" stroke="#333" stroke-width="1"/>
<g stroke="#fff" stroke-width=".5"><rect x="1892.3" y="455" width="9" height="7.2" fill="#555"/><path d="M1895.3 455V462.2M1898.3 455V462.2M1892.3 457.4H1901.3M1892.3 459.8H1901.3"/></g>
<path d="M1897.5 461L1902.5 458.5L1907.5 461V467L1902.5 469.5L1897.5 467Z" fill="#fff" stroke="#333" stroke-width="1"/><path d="M1897.5 461L1902.5 463.5L1907.5 461M1902.5 463.5V469.5" fill="none" stroke="#333" stroke-width=".9"/>
<path d="M1894.5 459C1893 459 1893.5 461 1893.5 463.5S1892.5 465 1892 465.3C1892.5 465.6 1893.5 466 1893.5 468S1893 472 1894.5 472M1909.5 459C1911 459 1910.5 461 1910.5 463.5S1911.5 465 1912 465.3C1911.5 465.6 1910.5 466 1910.5 468S1911 472 1909.5 472" fill="none" stroke="#333" stroke-width=".9"/>
<g stroke="#fff" stroke-width=".5"><rect x="1892.3" y="485" width="9" height="7.2" fill="#555"/><path d="M1895.3 485V492.2M1898.3 485V492.2M1892.3 487.4H1901.3M1892.3 489.8H1901.3"/></g>
<path d="M1893.5 489C1891.5 492 1891.5 498 1893.5 501M1909 489C1911 492 1911 498 1909 501" fill="none" stroke="#222" stroke-width="1.3"/>
<path d="M1896 499.5C1898 499.5 1899 498 1900.5 495S1903 490.5 1905 490.5M1897.5 491.5C1900 491 1901 493 1902 496S1903.5 499.5 1906 499" fill="none" stroke="#222" stroke-width="1.5"/>
<rect x="1891" y="523.5" width="22" height="22.5" rx="2.5" fill="#dcdcdc"/><rect x="1892.7" y="525.5" width="18.6" height="18.9" fill="#1a5ee8" stroke="#111" stroke-width="1"/>
<text x="1893.6" y="542" font-size="15.5" font-weight="bold" fill="#fff" style="font-family:'Liberation Serif',serif" textLength="17.5" lengthAdjust="spacingAndGlyphs">MK</text>

<!-- bottom right icons -->
<g fill="none" stroke="#2a2a2a" stroke-width="1.1">
<path d="M1824 869.5H1834C1837.5 869.5 1839 868.5 1839 866V869.5C1839 872 1837.5 873.5 1834 873.5H1824Z"/>
<ellipse cx="1834" cy="866" rx="5" ry="3.3"/><ellipse cx="1834" cy="866" rx="2.3" ry="1.3"/>
<path d="M1855.5 874.5C1855.5 866.5 1859.5 862.7 1864.4 862.7S1873.3 866.5 1873.3 874.5Z"/>
<path d="M1858.7 871.5C1859 867 1861.5 865.3 1864.4 865.3S1869.8 867 1870.1 871.5L1867 871C1866.5 869 1865.5 868.5 1864.4 868.5S1862.3 869 1861.8 871Z"/>
<path d="M1891.5 862H1903.5M1897.5 862V874M1892.5 862L1891.5 868.5H1895L1894 862M1902.5 862L1901.5 868.5H1905L1904 862"/>
</g>
<rect x="1891" y="873" width="13" height="2" fill="#2a2a2a"/>
</svg>
</body></html>
